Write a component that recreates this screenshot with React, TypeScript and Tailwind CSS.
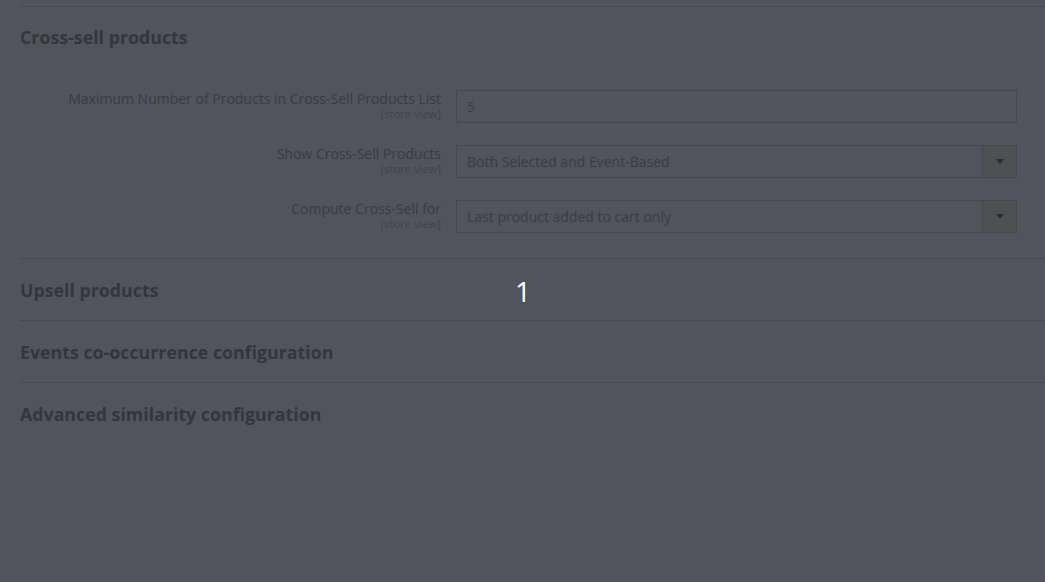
const ROWS = [
  { label: "Maximum Number of Products in Cross-Sell Products List", value: "5", select: false },
  { label: "Show Cross-Sell Products", value: "Both Selected and Event-Based", select: true },
  { label: "Compute Cross-Sell for", value: "Last product added to cart only", select: true },
];

const COLLAPSED = ["Upsell products", "Events co-occurrence configuration", "Advanced similarity configuration"];

function SectionTitle({ children, first }: { children: string; first?: boolean }) {
  return (
    <div className={`h-[61px] flex items-center ${first ? "" : "pt-[1px]"}`}>
      <h2 className="text-[17.8px] font-bold text-[#34363b] pl-[1px]">{children}</h2>
    </div>
  );
}

export default function App() {
  return (
    <div
      className="relative w-[1045px] h-[582px] overflow-hidden bg-[#51545c]"
      style={{ fontFamily: '"Open Sans", "Liberation Sans", sans-serif' }}
    >
      <div className="pl-[19px] pt-[6px]">
        {/* Cross-sell (expanded) */}
        <section className="border-t border-[#474950]">
          <SectionTitle first>Cross-sell products</SectionTitle>
          <div className="pt-[22px] pb-[25px] flex flex-col gap-[22px]">
            {ROWS.map((row) => (
              <div key={row.label} className="flex items-start">
                <div className="w-[422px] text-right">
                  <div className="text-[14px] leading-[18px] text-[#393b41]">{row.label}</div>
                  <div className="text-[11.2px] leading-[12px] text-[#41434a]">[store view]</div>
                </div>
                <div className="ml-[15px] mr-[28px] flex-1 h-[33px] flex border border-[#44474e]">
                  <div className="flex-1 flex items-center px-[10px] text-[14px] text-[#3a3c41]">{row.value}</div>
                  {row.select && (
                    <div className="w-[34px] border-l border-[#44474e] bg-[#4d5152] flex items-center justify-center">
                      <svg width="8" height="5" viewBox="0 0 8 5">
                        <path d="M0 0h8L4 5z" fill="#2b2c30" />
                      </svg>
                    </div>
                  )}
                </div>
              </div>
            ))}
          </div>
        </section>

        {COLLAPSED.map((title) => (
          <section key={title} className="border-t border-[#474950]">
            <SectionTitle>{title}</SectionTitle>
          </section>
        ))}
      </div>

      {/* step marker */}
      <div className="absolute left-[515px] top-[274px] text-[28px] font-normal leading-[34px] text-white">1</div>
    </div>
  );
}
